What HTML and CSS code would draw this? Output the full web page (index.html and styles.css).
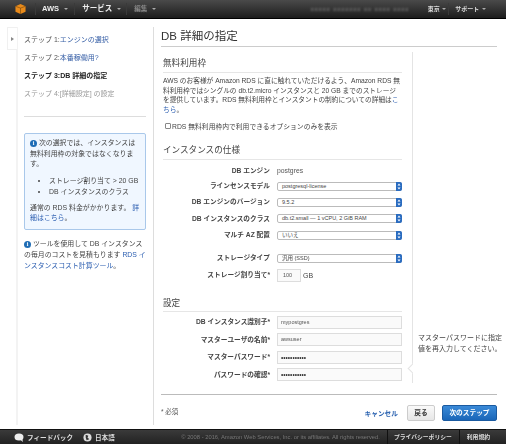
FILE: index.html
```html
<!DOCTYPE html>
<html lang="ja">
<head>
<meta charset="utf-8">
<title>DB 詳細の指定</title>
<link rel="stylesheet" href="styles.css">
</head>
<body>
<header class="topbar">
  <svg class="logo" viewBox="0 0 12 12" width="11" height="12"><path d="M6 0.500 11.500 3 11.500 9 6 11.500 .5 9 .5 3z" fill="#e88a1a"/><path d="M6 5v6.500M.5 3 6 5l5.500-2" stroke="#7a4a10" stroke-width=".7" fill="none"/></svg>
  <span class="nav nav-first">AWS <i class="caret"></i></span>
  <span class="nav">サービス <i class="caret"></i></span>
  <span class="nav nav-dim">編集 <i class="caret"></i></span>
  <span class="spacer"></span>
  <span class="account">xxxxx xxxxxxx xx xxxx xxxx</span>
  <span class="nav nav-small nav-region">東京 <i class="caret"></i></span>
  <span class="nav nav-small">サポート <i class="caret"></i></span>
</header>
<main class="page">
  <div class="tab"><i class="tab-arrow"></i></div>
  <aside class="side">
    <ol class="steps">
      <li>ステップ 1:<a>エンジンの選択</a></li>
      <li>ステップ 2:<a>本番稼働用?</a></li>
      <li class="current">ステップ 3:DB 詳細の指定</li>
      <li class="future">ステップ 4:[詳細設定] の設定</li>
    </ol>
    <div class="notice">
      <p><i class="info">i</i> 次の選択では、インスタンスは無料利用枠の対象ではなくなります。</p>
      <ul>
        <li>ストレージ割り当て &gt; 20 GB</li>
        <li>DB インスタンスのクラス</li>
      </ul>
      <p>通常の RDS 料金がかかります。 <a>詳細はこちら</a>。</p>
    </div>
    <p class="tool"><i class="info">i</i> ツールを使用して DB インスタンスの毎月のコストを見積もります <a>RDS インスタンスコスト計算ツール</a>。</p>
  </aside>
  <section class="content">
    <h1>DB 詳細の指定</h1>
    <div class="columns">
      <div class="form">
        <h2>無料利用枠</h2>
        <p class="intro">AWS のお客様が Amazon RDS に直に触れていただけるよう、Amazon RDS 無料利用枠ではシングルの db.t2.micro インスタンスと 20 GB までのストレージを提供しています。RDS 無料利用枠とインスタントの制約についての詳細は<a>こちら</a>。</p>
        <label class="check"><i class="box"></i>RDS 無料利用枠内で利用できるオプションのみを表示</label>
        <h2 class="gap-spec">インスタンスの仕様</h2>
        <div class="row row-static"><span class="lbl">DB エンジン</span><span class="val">postgres</span></div>
        <div class="row"><span class="lbl">ラインセンスモデル</span><span class="sel">postgresql-license<svg class="updown" viewBox="0 0 6 9"><path d="M3 1.500 4.500 3.500H1.500zM3 7.500 1.500 5.500H4.500z" fill="#fff"/></svg></span></div>
        <div class="row"><span class="lbl">DB エンジンのバージョン</span><span class="sel">9.5.2<svg class="updown" viewBox="0 0 6 9"><path d="M3 1.500 4.500 3.500H1.500zM3 7.500 1.500 5.500H4.500z" fill="#fff"/></svg></span></div>
        <div class="row"><span class="lbl">DB インスタンスのクラス</span><span class="sel">db.t2.small — 1 vCPU, 2 GiB RAM<svg class="updown" viewBox="0 0 6 9"><path d="M3 1.500 4.500 3.500H1.500zM3 7.500 1.500 5.500H4.500z" fill="#fff"/></svg></span></div>
        <div class="row"><span class="lbl">マルチ AZ 配置</span><span class="sel">いいえ<svg class="updown" viewBox="0 0 6 9"><path d="M3 1.500 4.500 3.500H1.500zM3 7.500 1.500 5.500H4.500z" fill="#fff"/></svg></span></div>
        <div class="row row-apart"><span class="lbl">ストレージタイプ</span><span class="sel">汎用 (SSD)<svg class="updown" viewBox="0 0 6 9"><path d="M3 1.500 4.500 3.500H1.500zM3 7.500 1.500 5.500H4.500z" fill="#fff"/></svg></span></div>
        <div class="row row-size"><span class="lbl">ストレージ割り当て*</span><span class="inp inp-small">100</span><span class="unit">GB</span></div>
        <h2 class="gap-set">設定</h2>
        <div class="row row-in"><span class="lbl">DB インスタンス識別子*</span><span class="inp">mypostgres</span></div>
        <div class="row row-in"><span class="lbl">マスターユーザの名前*</span><span class="inp">awsuser</span></div>
        <div class="row row-in"><span class="lbl">マスターパスワード*</span><span class="inp pw">•••••••••••</span></div>
        <div class="row row-in"><span class="lbl">パスワードの確認*</span><span class="inp pw">•••••••••••</span></div>
      </div>
      <aside class="help">
        <p>マスターパスワードに指定値を再入力してください。</p>
        <i class="help-arrow"></i>
      </aside>
    </div>
    <div class="actions">
      <span class="req">* 必須</span>
      <a class="cancel">キャンセル</a>
      <span class="btn btn-back">戻る</span>
      <span class="btn btn-next">次のステップ</span>
    </div>
  </section>
</main>
<footer class="foot">
  <span class="fb"><svg viewBox="0 0 10 9" width="10" height="9"><ellipse cx="5" cy="4" rx="4.500" ry="3.500" fill="#eee"/><path d="M6 6.500 9 9 8 5z" fill="#eee"/></svg>フィードバック</span>
  <span class="fb fb-lang"><svg viewBox="0 0 10 10" width="9" height="9"><circle cx="5" cy="5" r="4.500" fill="#ddd"/><path d="M3 2l3 1-1 2 2 2-3 1-1-3z" fill="#333"/></svg>日本語</span>
  <span class="spacer"></span>
  <span class="copy">© 2008 - 2016, Amazon Web Services, Inc. or its affiliates. All rights reserved.</span>
  <span class="flink flink-first">プライバシーポリシー</span>
  <span class="flink">利用規約</span>
</footer>
</body>
</html>
```
FILE: styles.css
```css
* { box-sizing: border-box; }
html, body { margin: 0; height: 100%; }
body {
  width: 506px; height: 444px; overflow: hidden;
  display: flex; flex-direction: column;
  font-family: "Liberation Sans", "Noto Sans CJK JP", sans-serif;
  font-size: 7px; color: #444; background: #fff;
  filter: blur(.25px);
}
a { color: #2a5db0; }
i { font-style: normal; }
p { margin: 0; }

.topbar {
  height: 19px; flex: none; display: flex; align-items: center;
  padding-left: 15px; color: #eee; font-weight: bold; font-size: 7.500px;
  background: linear-gradient(#4a4a4a, #1c1c1c); border-bottom: 1px solid #000;
}
.logo { margin-right: 9px; }
.nav { padding: 0 5px 0 7px; height: 12px; line-height: 12px; border-left: 1px solid #3a3a3a; white-space: nowrap; }
.nav-first { padding-left: 6px; padding-right: 6px; }
.nav-dim { color: #888; font-size: 6.500px; }
.nav-small { font-size: 6px; color: #ddd; padding: 0 0 0 6px; }
.nav-region { border-left: 0; padding: 0 2px 0 0; }
.caret { display: inline-block; margin-left: 3px; vertical-align: middle; border: 2px solid transparent; border-top-color: #aaa; border-bottom-width: 0; }
.nav-small .caret { margin-left: 1px; }
.spacer { flex: 1; }
.account { width: 108px; overflow: hidden; white-space: nowrap; font-size: 6px; letter-spacing: 1px; font-weight: normal; color: #999; filter: blur(1px); margin-right: 9px; }
.nav-small:last-child { margin-right: 20px; }

.page { flex: 1; min-height: 0; display: flex; padding-top: 8px; position: relative; }
.tab {
  position: absolute; left: 7px; top: 8px; width: 10px; height: 23px;
  background: #fff; border: 1px solid #f0f0f0; border-right: 0;
  display: flex; align-items: center; justify-content: center; z-index: 1;
}
.tab-arrow { border: 2.500px solid transparent; border-left: 3px solid #888; border-right: 0; }

.side {
  flex: none; width: 138px; margin-left: 16px; margin-bottom: 4px;
  border-left: 2px solid #f3f3f3; border-right: 1px solid #ddd;
  padding: 8px 7px 0 6px; line-height: 10px;
}
.steps { list-style: none; margin: 0; padding: 0 0 9px; border-bottom: 1px solid #ddd; color: #555; }
.steps li { height: 18px; line-height: 10px; white-space: nowrap; }
.steps a { color: #3a62a8; }
.steps .current { color: #222; font-weight: bold; }
.steps .future { color: #999; }
.notice {
  margin-top: 16px; height: 97px; padding: 4px 4px 0 5px; font-size: 6.900px;
  background: #f0f7ff; border: 1px solid #a9c8ea; border-radius: 2px; color: #444;
}
.notice ul { margin: 5.500px 0 5.500px; padding-left: 19px; }
.notice li { height: 11px; line-height: 11px; white-space: nowrap; }
.notice p { line-height: 10.500px; }
.info {
  display: inline-block; width: 7px; height: 7px; border-radius: 50%;
  background: #1f6db5; color: #fff; font: bold 6px/7px "Liberation Serif", serif; text-align: center; vertical-align: 0;
}
.tool { margin-top: 8px; line-height: 11px; font-size: 6.900px; }

.content { flex: 1; min-width: 0; padding: 0 9px 0 7px; }
h1 { margin: 0; height: 20px; font-size: 11.500px; font-weight: normal; line-height: 18px; color: #333; border-bottom: 1px solid #ccc; }
.columns { display: flex; height: 348px; border-bottom: 1px solid #bbb; }
.form { width: 239px; margin-left: 2px; padding-top: 10px; flex: none; }
h2 { margin: 0 0 3px; height: 16px; font-size: 8.600px; font-weight: normal; line-height: 12px; color: #444; border-bottom: 1px solid #e6e6e6; }
.intro { height: 44px; line-height: 9.700px; font-size: 6.700px; }
.check { display: flex; align-items: center; height: 10px; margin-top: 1px; font-size: 6.800px; padding-left: 2px; }
.box { width: 6px; height: 6px; border: 1px solid #888; border-radius: 1px; margin-right: 1px; }
.gap-spec { margin-top: 13px; }
.gap-set { margin-top: 12.500px; margin-bottom: 1px; height: 15.500px; }
.row { display: flex; align-items: center; height: 16.300px; }
.row-static { height: 15px; }
.row-apart { margin-top: 7px; }
.row-size { height: 18px; }
.row-in { height: 17.500px; }
.lbl { width: 107px; margin-right: 7px; margin-bottom: 2px; text-align: right; font-weight: bold; font-size: 6.700px; color: #444; white-space: nowrap; }
.val { color: #555; font-size: 6.800px; margin-bottom: 1px; }
.sel {
  flex: none; position: relative; width: 125px; height: 9px; line-height: 7px; padding-left: 4px;
  font-size: 5.500px; color: #444; background: #fff;
  border: 1px solid #bbb; border-radius: 2px;
}
.updown { position: absolute; right: -1px; top: -1px; width: 6px; height: 9px; background: #2a6cc0; border-radius: 0 2px 2px 0; }
.inp {
  flex: none; width: 125px; height: 13px; line-height: 11px; padding-left: 3px;
  font-size: 5.500px; color: #555; background: #fafafa; border: 1px solid #ddd;
}
.inp-small { width: 24px; padding-left: 5px; }
.pw { color: #333; font-size: 6.500px; }
.unit { margin-left: 2px; font-size: 7px; }
.help { position: relative; flex: 1; margin: 5px 0 11px 10px; padding: 279.500px 0 0 5px; border-left: 1px solid #e4e4e4; line-height: 11px; }
.help p { width: 86px; }
.help-arrow {
  position: absolute; left: -4px; top: 312.500px; width: 7px; height: 7px;
  background: #fff; border-left: 1px solid #e4e4e4; border-bottom: 1px solid #e4e4e4; transform: rotate(45deg);
}
.actions { display: flex; align-items: center; height: 36px; }
.req { font-size: 6.500px; color: #555; margin-right: auto; margin-top: -5px; }
.cancel { color: #2a62b0; font-size: 6.700px; font-weight: bold; margin-right: 9px; margin-top: -1px; }
.btn { height: 16px; line-height: 14px; text-align: center; font-size: 6.700px; font-weight: bold; border-radius: 2px; }
.btn-back { width: 28px; color: #333; background: linear-gradient(#fafafa, #e6e6e6); border: 1px solid #ccc; margin-right: 7px; }
.btn-next { width: 55px; color: #fff; background: linear-gradient(#3a8ad8, #1a66b8); border: 1px solid #1a5aa0; }

.foot {
  height: 15px; flex: none; display: flex; align-items: center; color: #ddd;
  background: linear-gradient(#3a3a3a, #222); border-top: 1px solid #111; font-size: 6.600px;
}
.fb { display: flex; align-items: center; gap: 3px; margin-left: 14px; font-weight: bold; }
.fb-lang { margin-left: 10px; }
.copy { font-size: 5.800px; color: #777; margin-right: 7px; }
.flink { padding: 0 7px 0 6px; font-weight: bold; height: 15px; line-height: 14px; font-size: 5.800px; border-left: 1px solid #111; }
.flink:last-child { padding: 0 16px 0 7px; }
```
